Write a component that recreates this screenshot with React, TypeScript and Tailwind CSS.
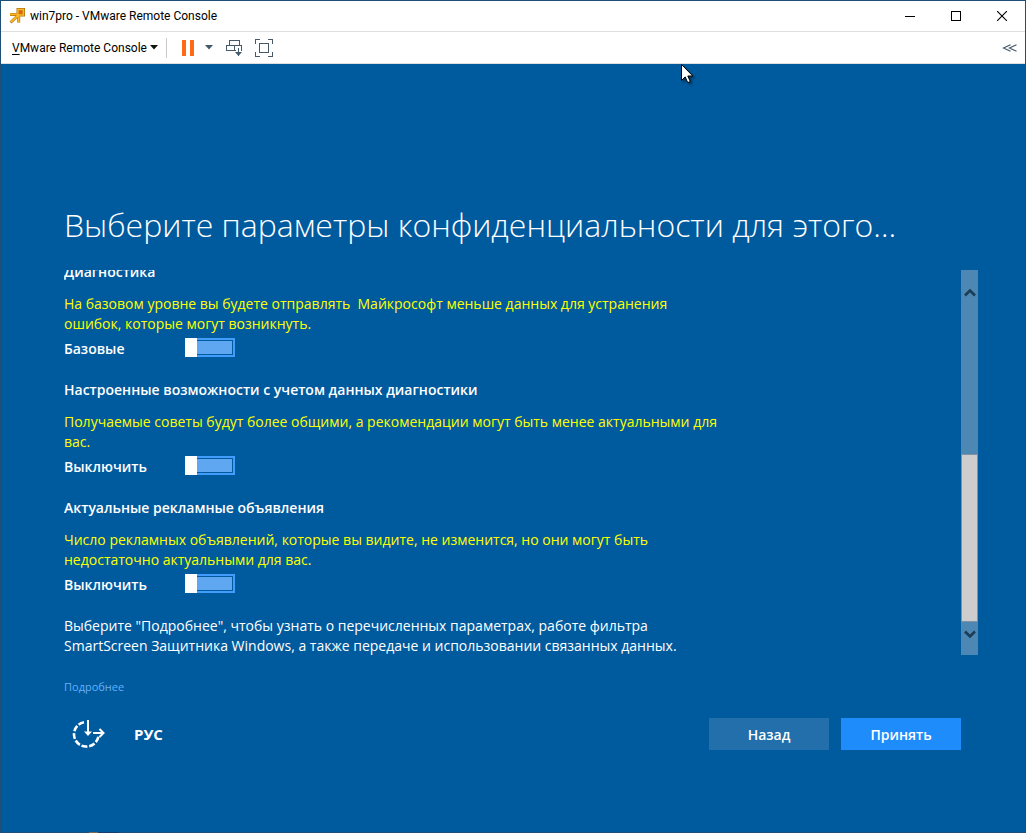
import { useState } from 'react'

type Setting = { title: string; description: string; state: string }

const settings: Setting[] = [
  {
    title: 'Диагностика',
    description:
      'На базовом уровне вы будете отправлять  Майкрософт меньше данных для устранения\nошибок, которые могут возникнуть.',
    state: 'Базовые',
  },
  {
    title: 'Настроенные возможности с учетом данных диагностики',
    description:
      'Получаемые советы будут более общими, а рекомендации могут быть менее актуальными для\nвас.',
    state: 'Выключить',
  },
  {
    title: 'Актуальные рекламные объявления',
    description:
      'Число рекламных объявлений, которые вы видите, не изменится, но они могут быть\nнедостаточно актуальными для вас.',
    state: 'Выключить',
  },
]

function VmrcLogo() {
  return (
    <svg width="16" height="16" viewBox="0 0 16 16" fill="none" aria-hidden="true">
      <path d="M1 6.500h7.500M9.700 8v6.500M1.500 14.500 9 7.500" stroke="#b5730c" strokeWidth="3" />
      <rect x="8.900" y="1.400" width="5.700" height="5.700" fill="#e8601a" stroke="#b5730c" strokeWidth="2.800" />
      <path d="M1 6.300h8M9.700 7v7.200M1.700 14.200 9.500 7" stroke="#fcb827" strokeWidth="1.800" />
      <rect x="8.900" y="1.500" width="5.500" height="5.500" stroke="#fcb827" strokeWidth="1.500" />
    </svg>
  )
}

function TitleBar() {
  const control = 'flex h-full w-[46px] items-center justify-center'
  return (
    <header className="flex h-[31px] items-center border-b border-[#dedede] bg-white pb-px pl-2 font-['Roboto','Open_Sans',sans-serif]">
      <VmrcLogo />
      <h1 className="ml-[5px] flex-1 text-[12px]">win7pro - VMware Remote Console</h1>
      <button aria-label="Minimize" className={control}>
        <svg width="10" height="10" shapeRendering="crispEdges"><path d="M0 5.5h10" stroke="#000" /></svg>
      </button>
      <button aria-label="Maximize" className={control}>
        <svg width="10" height="10" shapeRendering="crispEdges"><rect x=".5" y=".5" width="9" height="9" fill="none" stroke="#000" /></svg>
      </button>
      <button aria-label="Close" className={control}>
        <svg width="10" height="10"><path d="M0 0l10 10M10 0 0 10" stroke="#000" strokeWidth="1.1" /></svg>
      </button>
    </header>
  )
}

function Toolbar() {
  return (
    <nav className="flex h-8 items-center border-b border-[#dedede] bg-white pr-2 pl-[11px] font-['Roboto','Open_Sans',sans-serif]">
      <button className="flex items-center text-[12px]">
        <span className="w-[134px] text-left whitespace-nowrap"><span className="underline underline-offset-2">V</span>Mware Remote Console</span>
        <svg className="ml-1" width="8" height="5"><path d="M0 0h8L4 4.5z" fill="#111" /></svg>
      </button>
      <span className="ml-2 h-5 w-px bg-[#c8c8c8]" />
      <button aria-label="Suspend" className="ml-[15px]">
        <svg width="12" height="16" shapeRendering="crispEdges"><path d="M0 0h4v16H0zM8 0h4v16H8z" fill="#ff6a17" /></svg>
      </button>
      <button aria-label="Power options" className="ml-[11px]">
        <svg width="8" height="5"><path d="M0 0h8L4 4.5z" fill="#44596a" /></svg>
      </button>
      <button aria-label="Send Ctrl+Alt+Del" className="ml-[13px]">
        <svg width="17" height="18" fill="none" stroke="#44596a" shapeRendering="crispEdges">
          <path d="M3.500 1.500h10v5h-10zM.5 6.500h8v5h-8zM10 11.500H8.500v-5h7v5H15" />
          <path d="M12.500 9v8" />
          <path d="M9 13h7l-3.500 4z" fill="#44596a" stroke="none" shapeRendering="auto" />
        </svg>
      </button>
      <button aria-label="Full screen" className="ml-3">
        <svg width="18" height="18" fill="none" stroke="#44596a" shapeRendering="crispEdges">
          <path d="M.5 5V.5H5M13 .5h4.500V5M17.500 13v4.500H13M5 17.500H.5V13M4.500 4.500h9v9h-9z" />
        </svg>
      </button>
      <button aria-label="Collapse toolbar" className="ml-auto">
        <svg width="15" height="8" fill="none" stroke="#44596a" strokeWidth="1.200"><path d="M8.500.700 1.500 4l7 3.300M14.500.700 7.500 4l7 3.300" /></svg>
      </button>
    </nav>
  )
}

function SettingItem({ setting }: { setting: Setting }) {
  const [on, setOn] = useState(false)
  return (
    <section>
      <h3 className="font-semibold">{setting.title}</h3>
      <p className="mt-3 whitespace-pre text-[#ffff00]">{setting.description}</p>
      <label className="mt-1 flex h-5 items-start">
        <span className="w-[121px] leading-[22px] font-semibold">{setting.state}</span>
        <input
          type="checkbox"
          role="switch"
          checked={on}
          onChange={() => setOn(!on)}
          className="relative h-[19px] w-[50px] appearance-none border-2 border-[#429cfb] bg-[#60a7f2] bg-clip-content p-px before:absolute before:-top-0.5 before:-left-0.5 before:h-[19px] before:w-3 before:bg-white checked:before:left-9"
        />
      </label>
    </section>
  )
}

function ScrollBar() {
  return (
    <div className="flex w-[17px] flex-col bg-[#4d87b4]">
      <button aria-label="Прокрутить вверх" className="flex h-11 items-center justify-center">
        <svg width="12" height="9"><path d="M1 7.500 6 2.500l5 5" fill="none" stroke="#1b3c55" strokeWidth="2.600" /></svg>
      </button>
      <div className="flex-1" />
      <div className="h-[168px] border border-[#8193a3] bg-[#cdcdcd]" />
      <button aria-label="Прокрутить вниз" className="flex h-[33px] justify-center pt-2">
        <svg width="12" height="9"><path d="M1 1.500 6 6.500l5-5" fill="none" stroke="#1b3c55" strokeWidth="2.600" /></svg>
      </button>
    </div>
  )
}

function EaseOfAccessIcon() {
  return (
    <svg width="34" height="30" viewBox="0 0 34 30" fill="none" stroke="#fff">
      <path d="M12 3.200A12.300 12.300 0 1 0 26.500 17" strokeWidth="2.600" strokeDasharray="6 1.800" />
      <path d="M16 1v13M21 14h9" strokeWidth="2" />
      <path d="M12 12.500h8L16 17z" fill="#fff" stroke="none" />
      <path d="m27.500 10 4 4-4 4" strokeWidth="2" />
    </svg>
  )
}

export default function App() {
  return (
    <div className="relative flex min-h-screen flex-col border border-[#1d4f78] bg-[#005a9e] font-['Open_Sans','Noto_Sans',sans-serif] text-black">
      <TitleBar />
      <Toolbar />
      <main className="flex flex-col pr-[47px] pl-[63px] text-white">
        <h2 className="mt-[134px] text-[32px] leading-[54px] font-light whitespace-nowrap">
          Выберите параметры конфиденциальности для этого…
        </h2>
        <div className="mt-[18px] flex h-[385px]">
          <div className="flex flex-1 flex-col justify-end overflow-hidden text-[14px] leading-5">
            <div className="-mb-px flex flex-col gap-[22px]">
              {settings.map((s) => (
                <SettingItem key={s.title} setting={s} />
              ))}
              <p className="whitespace-pre">
                {'Выберите "Подробнее", чтобы узнать о перечисленных параметрах, работе фильтра\nSmartScreen Защитника Windows, а также передаче и использовании связанных данных.'}
              </p>
            </div>
          </div>
          <ScrollBar />
        </div>
        <a href="#more" className="mt-6 self-start text-[11px] leading-4 text-[#66b0f8]">Подробнее</a>
        <footer className="mt-[23px] flex h-8 items-center pr-[17px]">
          <button aria-label="Специальные возможности" className="ml-2">
            <EaseOfAccessIcon />
          </button>
          <button className="ml-7 text-[15px] font-bold">РУС</button>
          <div className="ml-auto flex gap-3 text-[14px] font-semibold">
            <button className="h-8 w-[120px] bg-[#226fab]">Назад</button>
            <button className="h-8 w-[120px] bg-[#1f8cfb]">Принять</button>
          </div>
        </footer>
      </main>
      <svg className="absolute top-[63px] left-[680px] drop-shadow-[2px_2px_1px_rgba(0,0,0,0.4)]" width="13" height="20" aria-hidden="true">
        <path d="M.5.500v16l3.700-3.600 2.500 5.700 2.600-1.100-2.500-5.500h5z" fill="#fff" stroke="#000" />
      </svg>
      <span className="absolute bottom-[-1px] left-[88px] flex h-px w-[30px] bg-[#173d68]">
        <span className="w-[9px] bg-[#7b6a4a]" />
      </span>
    </div>
  )
}
